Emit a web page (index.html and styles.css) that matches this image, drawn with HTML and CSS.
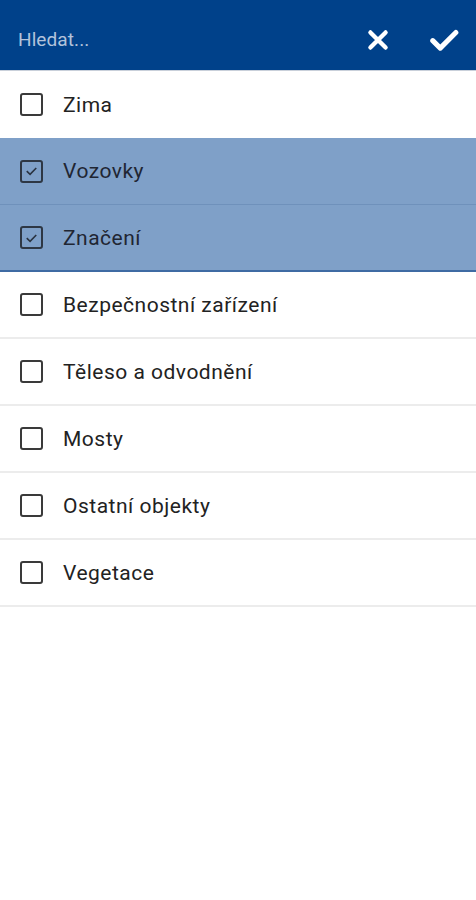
FILE: index.html
```html
<!DOCTYPE html>
<html>
<head>
<meta charset="utf-8">
<link rel="stylesheet" href="styles.css">
</head>
<body>
<div class="app">
  <header class="bar">
    <span class="search">Hledat...</span>
    <div class="actions">
      <svg class="icon x" viewBox="0 0 24 24" width="26" height="26"><path d="M5 5L19 19M19 5L5 19" stroke="#fff" stroke-width="4" stroke-linecap="round"/></svg>
      <svg class="icon ok" viewBox="0 0 24 24" width="30" height="30"><path d="M3 12.5L9 18.5L21.5 6" stroke="#fff" stroke-width="4" fill="none" stroke-linecap="round" stroke-linejoin="round"/></svg>
    </div>
  </header>
  <ul class="list">
    <li class="row"><span class="box"></span><span class="label">Zima</span></li>
    <li class="row sel"><span class="box"><svg viewBox="0 0 20 20" width="20" height="20"><path d="M5 10.2L8.5 13.5L15 6.8" stroke="#2a3340" stroke-width="1.7" fill="none"/></svg></span><span class="label">Vozovky</span></li>
    <li class="row sel last"><span class="box"><svg viewBox="0 0 20 20" width="20" height="20"><path d="M5 10.2L8.5 13.5L15 6.8" stroke="#2a3340" stroke-width="1.7" fill="none"/></svg></span><span class="label">Značení</span></li>
    <li class="row"><span class="box"></span><span class="label">Bezpečnostní zařízení</span></li>
    <li class="row"><span class="box"></span><span class="label">Těleso a odvodnění</span></li>
    <li class="row"><span class="box"></span><span class="label">Mosty</span></li>
    <li class="row"><span class="box"></span><span class="label">Ostatní objekty</span></li>
    <li class="row"><span class="box"></span><span class="label">Vegetace</span></li>
  </ul>
</div>
</body>
</html>
```
FILE: styles.css
```css
* { box-sizing: border-box; }
html, body { margin: 0; padding: 0; background: #fff; }
body { font-family: Roboto, "Noto Sans", sans-serif; }
.app { width: 476px; }
.bar {
  height: 71px;
  background: #00418a;
  border-bottom: 1px solid #c9d0da;
  display: flex;
  align-items: center;
  justify-content: space-between;
  padding: 9px 17px 0 18px;
}
.search { color: #b3c3db; font-size: 19px; letter-spacing: 0.1px; }
.actions { display: flex; align-items: center; gap: 38px; }
.icon { display: block; }
.list { list-style: none; margin: 0; padding: 0; }
.row {
  height: 67px;
  display: flex;
  align-items: center;
  padding-left: 20px;
  border-bottom: 2px solid #ececec;
}
.row.sel { background: #7fa0c8; border-bottom: 1px solid #6f91bb; }
.row.sel.last { border-bottom: 2px solid #3f6ba3; }
.row:first-child { border-bottom: none; }
.box {
  width: 23px;
  height: 23px;
  border: 2px solid #3a3a3a;
  border-radius: 3px;
  display: flex;
  align-items: center;
  justify-content: center;
  flex: none;
}
.sel .box { border-color: #2e3744; }
.box svg { display: block; }
.label { margin-left: 20px; font-size: 21px; color: #222; letter-spacing: 0.5px; }
.sel .label { color: #1f2633; }
```
